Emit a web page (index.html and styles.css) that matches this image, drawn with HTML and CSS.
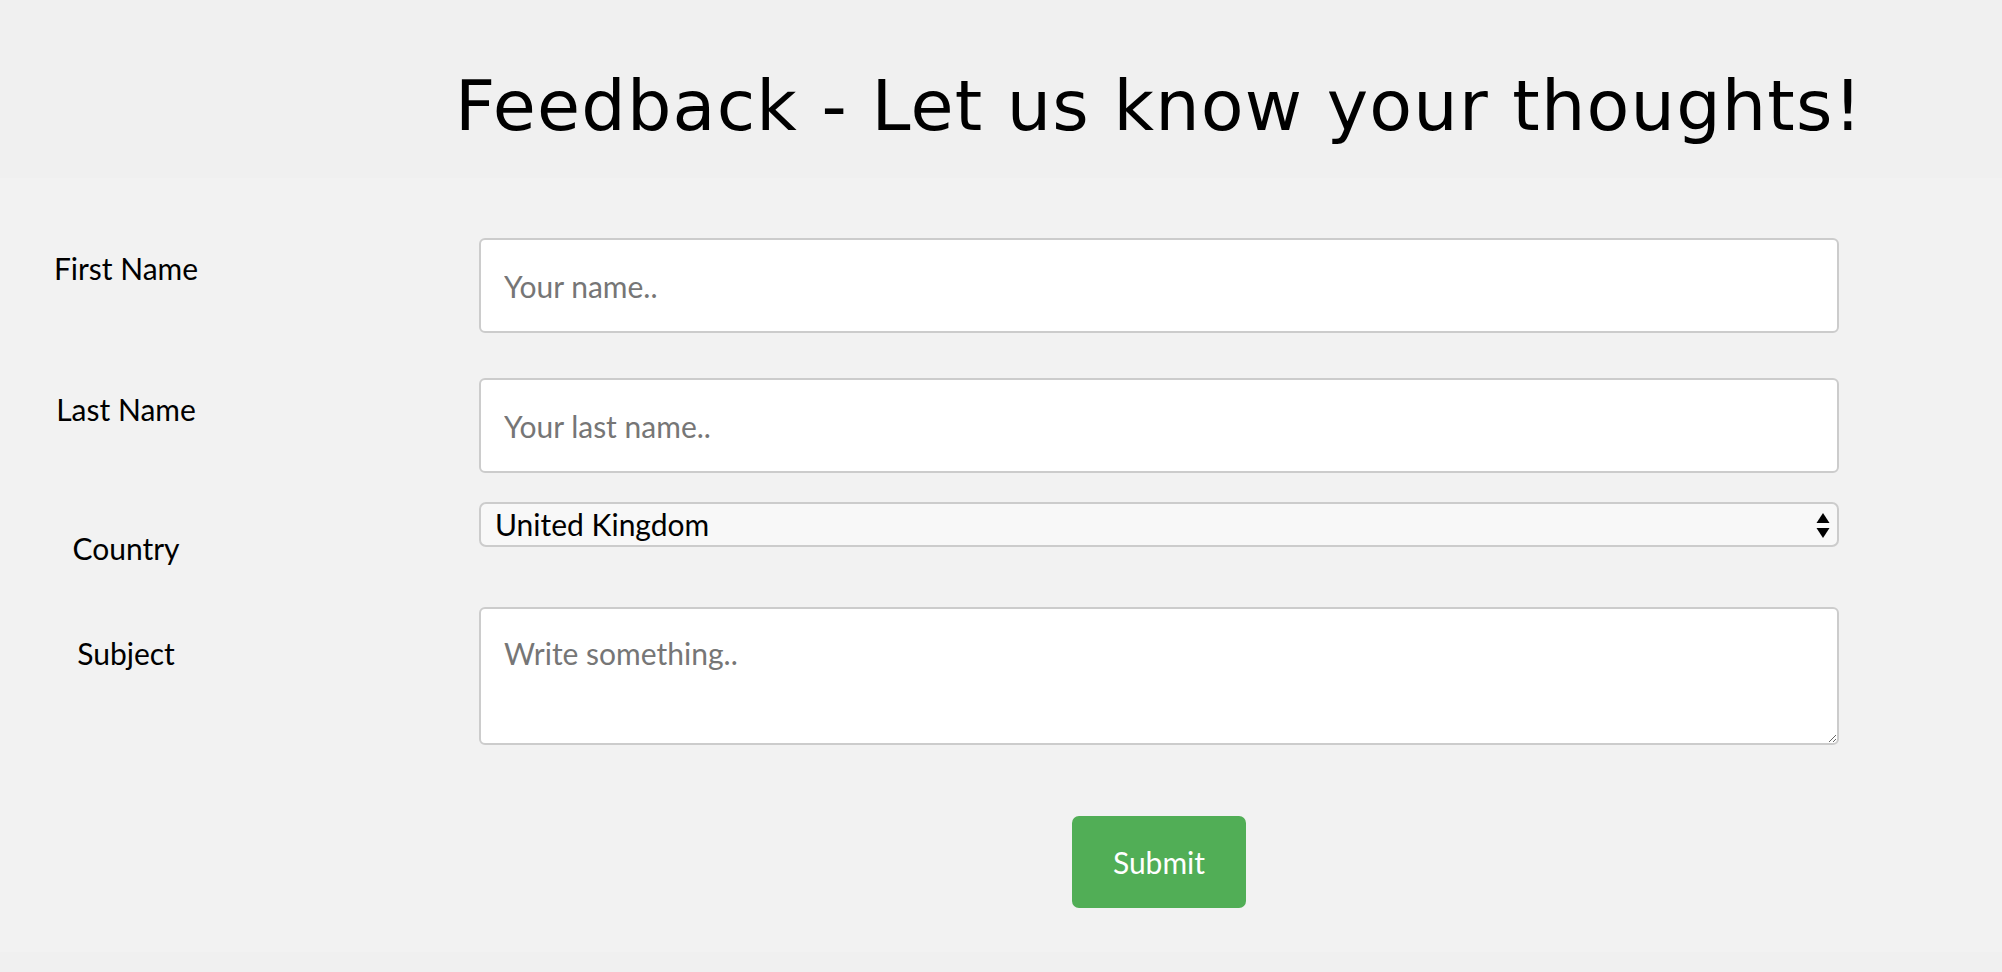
FILE: index.html
```html
<!DOCTYPE html>
<html lang="en">
<head>
<meta charset="utf-8">
<title>Feedback</title>
<link rel="stylesheet" href="styles.css">
</head>
<body>
  <header class="page-header">
    <div class="header-row">
      <div class="label-col"></div>
      <div class="control-col title-col">
        <h1 class="title">Feedback - Let us know your thoughts!</h1>
      </div>
    </div>
  </header>
  <form class="feedback-form">
    <div class="form-row row-first">
      <div class="label-col"><label class="field-label" for="fname">First Name</label></div>
      <div class="control-col"><input class="text-input" type="text" id="fname" placeholder="Your name.."></div>
    </div>
    <div class="form-row row-second">
      <div class="label-col"><label class="field-label label-mid" for="lname">Last Name</label></div>
      <div class="control-col"><input class="text-input" type="text" id="lname" placeholder="Your last name.."></div>
    </div>
    <div class="form-row row-third">
      <div class="label-col"><label class="field-label label-low" for="country">Country</label></div>
      <div class="control-col">
        <div class="select-wrap">
          <select class="select-input" id="country">
            <option>United Kingdom</option>
            <option>Australia</option>
            <option>Canada</option>
            <option>USA</option>
          </select>
          <svg class="select-arrows" width="14" height="26" viewBox="0 0 14 26" aria-hidden="true">
            <path d="M7 0 L13.5 10 L0.5 10 Z" fill="#000"/>
            <path d="M0.5 15 L13.5 15 L7 25 Z" fill="#000"/>
          </svg>
        </div>
      </div>
    </div>
    <div class="form-row row-fourth">
      <div class="label-col"><label class="field-label label-low" for="subject">Subject</label></div>
      <div class="control-col"><textarea class="text-area" id="subject" placeholder="Write something.."></textarea></div>
    </div>
    <div class="form-row row-submit">
      <div class="label-col"></div>
      <div class="control-col submit-col">
        <button class="submit-btn" type="submit">Submit</button>
      </div>
    </div>
  </form>
</body>
</html>
```
FILE: styles.css
```css
html, body {
  margin: 0;
  padding: 0;
}

body {
  background: #f0f0f0;
  font-family: "Lato", "Liberation Sans", sans-serif;
  font-size: 30px;
  color: #000;
}

.page-header {
  height: 178px;
  box-sizing: border-box;
  padding-top: 64px;
}

.header-row,
.form-row {
  display: flex;
  align-items: flex-start;
}

.label-col {
  width: 252px;
  flex: 0 0 252px;
  text-align: center;
}

.control-col {
  width: 1360px;
  flex: 0 0 1360px;
  margin-left: 227px;
}

.title-col {
  display: flex;
  justify-content: center;
}

.title {
  margin: 0;
  font-family: "DejaVu Sans", "Open Sans", sans-serif;
  font-weight: 400;
  font-size: 70px;
  line-height: 1.2;
  letter-spacing: 1.2px;
  white-space: nowrap;
  color: #000;
}

.feedback-form {
  background: #f2f2f2;
  padding: 60px 0 44px;
}

.field-label {
  display: inline-block;
  padding-top: 12px;
  line-height: 37px;
}

.field-label.label-mid {
  padding-top: 13px;
}

.field-label.label-low {
  padding-top: 28px;
}

.row-second {
  margin-top: 45px;
}

.row-third {
  margin-top: 29px;
}

.row-fourth {
  margin-top: 40px;
}

.row-submit {
  margin-top: 71px;
}

.text-input,
.select-input,
.text-area {
  display: block;
  width: 100%;
  box-sizing: border-box;
  font-family: "Lato", "Liberation Sans", sans-serif;
  font-size: 30px;
  color: #000;
  border: 2px solid #cccccc;
  margin: 0;
}

.text-input {
  height: 95px;
  padding: 0 23px;
  line-height: 37px;
  background: #fff;
  border-radius: 6px;
  outline: none;
}

.text-input::placeholder,
.text-area::placeholder {
  color: #767676;
  opacity: 1;
}

.select-wrap {
  position: relative;
}

.select-input {
  height: 45px;
  padding: 0 40px 0 14px;
  line-height: 37px;
  background: #f8f8f8;
  border-radius: 7px;
  -webkit-appearance: none;
  appearance: none;
  outline: none;
}

.select-arrows {
  position: absolute;
  right: 9px;
  top: 11px;
  pointer-events: none;
}

.text-area {
  height: 138px;
  padding: 26px 23px;
  line-height: 37px;
  background: #fff;
  border-radius: 6px;
  resize: vertical;
  outline: none;
}

.submit-col {
  display: flex;
  justify-content: center;
}

.submit-btn {
  width: 174px;
  height: 92px;
  background: #51ae56;
  color: #fff;
  border: none;
  border-radius: 7px;
  font-family: "Lato", "Liberation Sans", sans-serif;
  font-size: 30px;
  padding: 0;
  cursor: pointer;
}
```
